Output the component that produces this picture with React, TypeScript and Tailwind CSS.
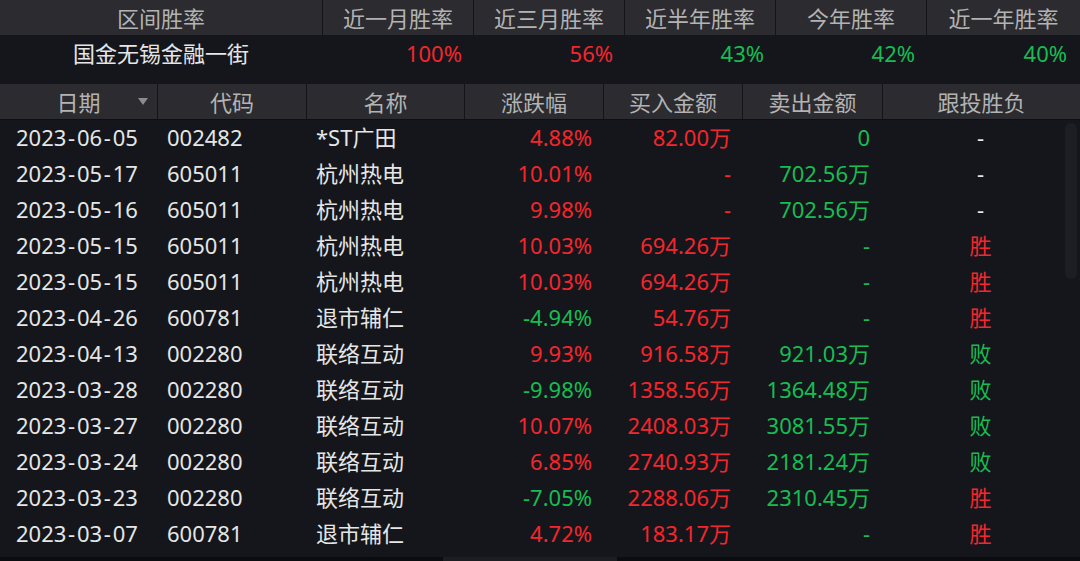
import React from "react";

const RED = "text-[#f4262d]";
const GREEN = "text-[#17bd52]";
const WHITE = "text-[#e6e6e6]";

type Row = {
  date: string;
  code: string;
  name: string;
  chg: string;
  buy: string;
  sell: string;
  res: string;
};

const rows: Row[] = [
  { date: "2023-06-05", code: "002482", name: "*ST广田", chg: "4.88%", buy: "82.00万", sell: "0", res: "-" },
  { date: "2023-05-17", code: "605011", name: "杭州热电", chg: "10.01%", buy: "-", sell: "702.56万", res: "-" },
  { date: "2023-05-16", code: "605011", name: "杭州热电", chg: "9.98%", buy: "-", sell: "702.56万", res: "-" },
  { date: "2023-05-15", code: "605011", name: "杭州热电", chg: "10.03%", buy: "694.26万", sell: "-", res: "胜" },
  { date: "2023-05-15", code: "605011", name: "杭州热电", chg: "10.03%", buy: "694.26万", sell: "-", res: "胜" },
  { date: "2023-04-26", code: "600781", name: "退市辅仁", chg: "-4.94%", buy: "54.76万", sell: "-", res: "胜" },
  { date: "2023-04-13", code: "002280", name: "联络互动", chg: "9.93%", buy: "916.58万", sell: "921.03万", res: "败" },
  { date: "2023-03-28", code: "002280", name: "联络互动", chg: "-9.98%", buy: "1358.56万", sell: "1364.48万", res: "败" },
  { date: "2023-03-27", code: "002280", name: "联络互动", chg: "10.07%", buy: "2408.03万", sell: "3081.55万", res: "败" },
  { date: "2023-03-24", code: "002280", name: "联络互动", chg: "6.85%", buy: "2740.93万", sell: "2181.24万", res: "败" },
  { date: "2023-03-23", code: "002280", name: "联络互动", chg: "-7.05%", buy: "2288.06万", sell: "2310.45万", res: "胜" },
  { date: "2023-03-07", code: "600781", name: "退市辅仁", chg: "4.72%", buy: "183.17万", sell: "-", res: "胜" },
];

const topCols = "grid grid-cols-[322px_150px_150px_150px_150px_153px] gap-x-px";
const tableCols = "grid grid-cols-[157px_148px_157px_138px_138px_139px_197px] gap-x-px";

function resColor(r: string) {
  if (r === "胜") return RED;
  if (r === "败") return GREEN;
  return WHITE;
}

function DateText({ d }: { d: string }) {
  const parts = d.split("-");
  return (
    <>
      {parts[0]}
      <span className="mx-[1.75px]">-</span>
      {parts[1]}
      <span className="mx-[1.75px]">-</span>
      {parts[2]}
    </>
  );
}

export default function App() {
  return (
    <div
      className="relative w-[1080px] h-[561px] overflow-hidden bg-[#14161b] text-[22px] leading-none"
      style={{ fontFamily: '"Noto Sans", "Noto Sans CJK SC", sans-serif' }}
    >
      {/* top summary header */}
      <div className={`${topCols} bg-[#141418] h-[35px]`}>
        {["区间胜率", "近一月胜率", "近三月胜率", "近半年胜率", "今年胜率", "近一年胜率"].map((t) => (
          <div key={t} className="bg-[#2b2b30] flex items-center justify-center text-[#b3b3b3]">
            {t}
          </div>
        ))}
      </div>
      {/* summary values */}
      <div className={`${topCols} h-[49px] pt-[7px]`}>
        <div className={`flex justify-center ${WHITE}`}>国金无锡金融一街</div>
        <div className={`flex justify-end pr-[11px] ${RED}`}>100%</div>
        <div className={`flex justify-end pr-[11px] ${RED}`}>56%</div>
        <div className={`flex justify-end pr-[11px] ${GREEN}`}>43%</div>
        <div className={`flex justify-end pr-[11px] ${GREEN}`}>42%</div>
        <div className={`flex justify-end pr-[13px] ${GREEN}`}>40%</div>
      </div>
      {/* table header */}
      <div className={`${tableCols} bg-[#141418] h-[36px] border-b border-[#0e0f12]`}>
        {["日期", "代码", "名称", "涨跌幅", "买入金额", "卖出金额", "跟投胜负"].map((t, i) => (
          <div key={t} className="relative bg-[#2b2b30] flex items-center justify-center text-[#b3b3b3]">
            {t}
            {i === 0 && (
              <span className="absolute right-[9px] top-[14px] w-0 h-0 border-l-[5.5px] border-r-[5.5px] border-t-[7px] border-l-transparent border-r-transparent border-t-[#8c8c8c]" />
            )}
          </div>
        ))}
      </div>
      {/* rows */}
      <div className="flex flex-col">
        {rows.map((r, i) => (
          <div key={i} className={`${tableCols} h-[36px] items-center pb-[2px]`}>
            <div className={`pl-[16px] ${WHITE}`}>
              <DateText d={r.date} />
            </div>
            <div className={`pl-[9px] ${WHITE}`}>{r.code}</div>
            <div className={`pl-[9px] ${WHITE}`}>{r.name}</div>
            <div className={`text-right pr-[11px] ${r.chg.startsWith("-") ? GREEN : RED}`}>{r.chg}</div>
            <div className={`text-right pr-[11px] ${RED}`}>{r.buy}</div>
            <div className={`text-right pr-[12px] ${GREEN}`}>{r.sell}</div>
            <div className={`text-center pr-[2px] ${resColor(r.res)}`}>{r.res}</div>
          </div>
        ))}
      </div>
      {/* vertical scrollbar thumb */}
      <div className="absolute left-[1065px] top-[123px] w-[12px] h-[156px] rounded-full bg-[#1d1e23]" />
      {/* bottom horizontal scrollbar */}
      <div className="absolute left-0 bottom-0 w-[1080px] h-[4px] bg-[#0b0c0f]">
        <div className="absolute left-[443px] top-0 w-[174px] h-[4px] bg-[#1c1d21]" />
      </div>
    </div>
  );
}
